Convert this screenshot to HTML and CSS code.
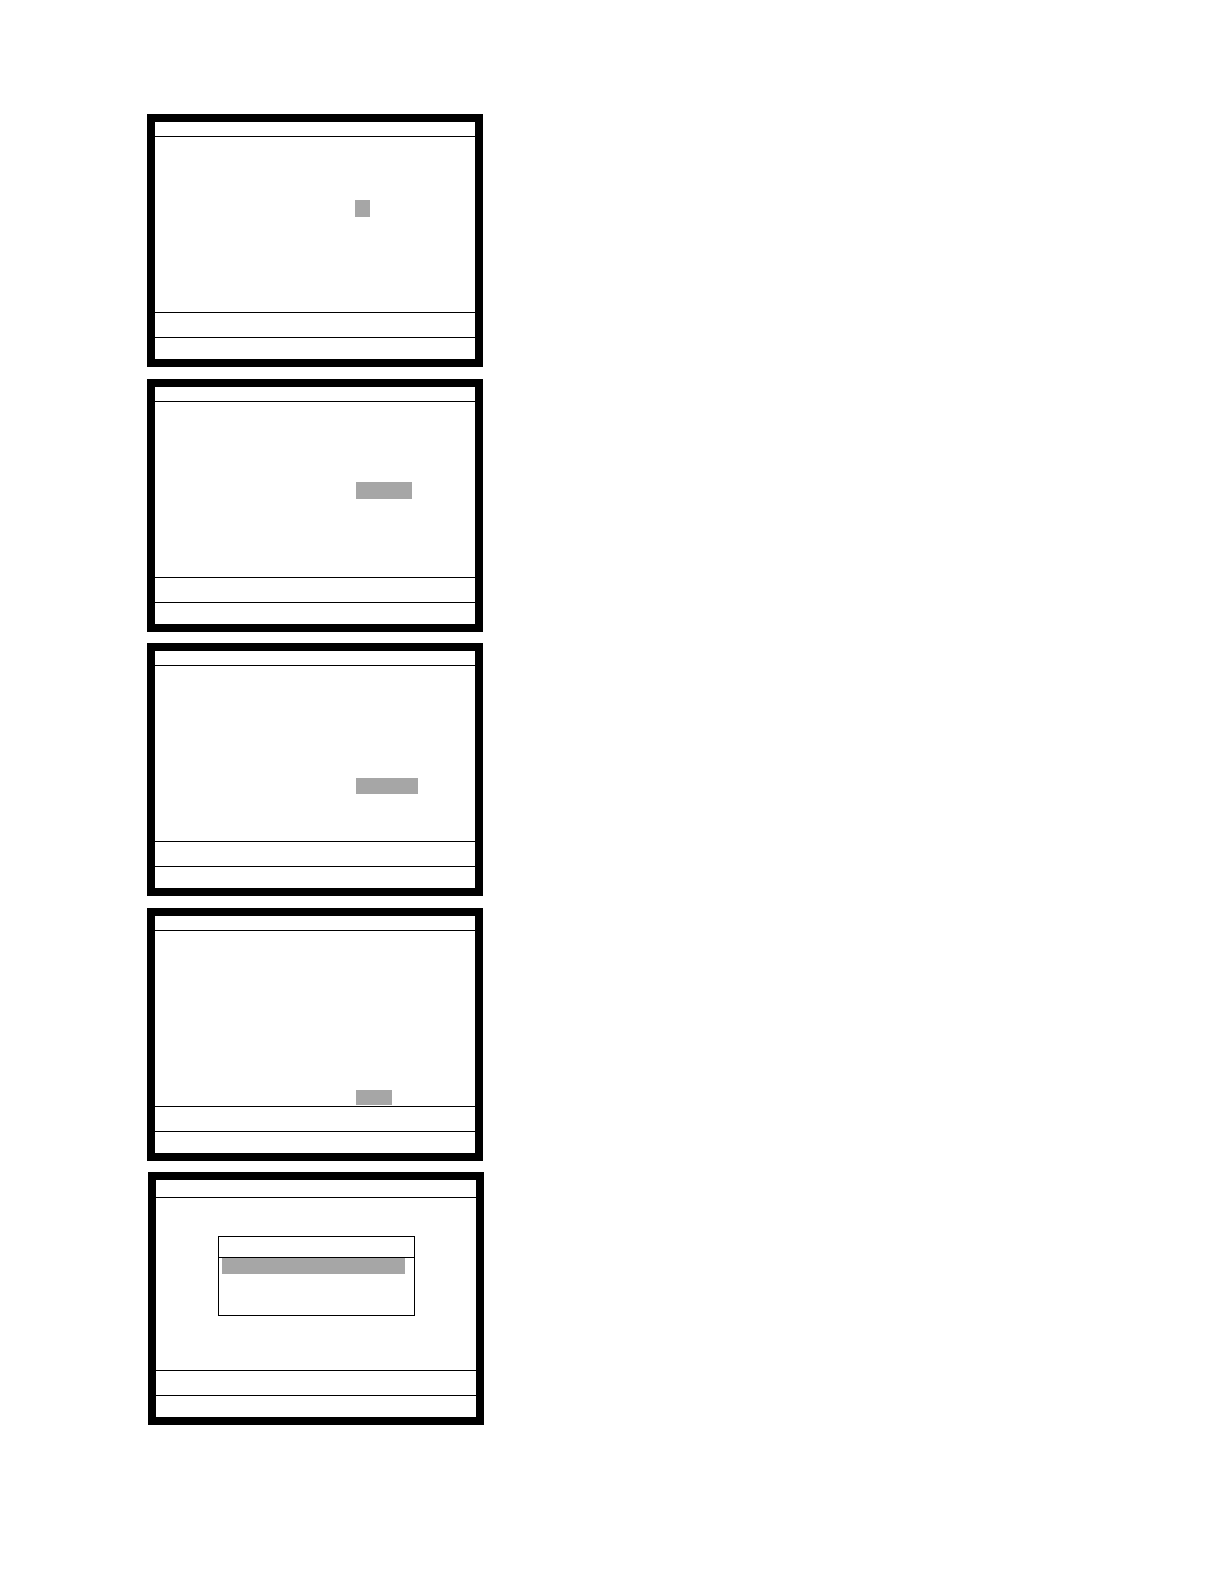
FILE: index.html
```
<!DOCTYPE html>
<html>
<head>
<meta charset="utf-8">
<link rel="stylesheet" href="styles.css">
</head>
<body>
<main class="stack">
  <section class="screen">
    <div class="bar-top"></div>
    <div class="area area-1"><span class="sel sel-1"></span></div>
    <div class="bar-mid"></div>
    <div class="bar-low"></div>
  </section>
  <section class="screen">
    <div class="bar-top"></div>
    <div class="area area-2"><span class="sel sel-2"></span></div>
    <div class="bar-mid"></div>
    <div class="bar-low"></div>
  </section>
  <section class="screen">
    <div class="bar-top"></div>
    <div class="area area-3"><span class="sel sel-3"></span></div>
    <div class="bar-mid"></div>
    <div class="bar-low"></div>
  </section>
  <section class="screen">
    <div class="bar-top"></div>
    <div class="area area-4"><span class="sel sel-4"></span></div>
    <div class="bar-mid"></div>
    <div class="bar-low"></div>
  </section>
  <section class="screen screen-5">
    <div class="bar-top bar-top-5"></div>
    <div class="area area-5">
      <div class="dialog">
        <div class="dialog-head"></div>
        <div class="dialog-list"><span class="dialog-item"></span></div>
      </div>
    </div>
    <div class="bar-mid"></div>
    <div class="bar-low"></div>
  </section>
</main>
</body>
</html>
```
FILE: styles.css
```
html, body {
  margin: 0;
  padding: 0;
  background: #ffffff;
  font-family: "Liberation Sans", Arial, sans-serif;
}

.stack {
  display: flex;
  flex-direction: column;
  align-items: flex-start;
  gap: 11.5px;
  padding: 114px 0 0 147px;
}

.screen {
  box-sizing: border-box;
  width: 336px;
  height: 253px;
  border: 8px solid #000;
  background: #fff;
  display: flex;
  flex-direction: column;
}

.screen-5 {
  margin-left: 1px;
}

.bar-top {
  height: 14px;
  border-bottom: 1px solid #000;
  flex: none;
}

.bar-top-5 {
  height: 17px;
  margin-right: -8px;
}

.area {
  flex: 1;
  border-bottom: 1px solid #000;
  display: flex;
  flex-direction: column;
  align-items: flex-start;
  padding-left: 200px;
}

.bar-mid {
  height: 24px;
  border-bottom: 1px solid #000;
  flex: none;
}

.bar-low {
  height: 21px;
  flex: none;
}

.sel {
  display: block;
  background: #a6a6a6;
}

.area-1 { padding-top: 63px; }
.sel-1 { width: 15px; height: 17px; }

.area-2 { padding-top: 80px; padding-left: 201px; }
.sel-2 { width: 56px; height: 17px; }

.area-3 { padding-top: 112px; padding-left: 201px; }
.sel-3 { width: 62px; height: 16px; }

.area-4 { padding-top: 159px; padding-left: 201px; }
.sel-4 { width: 36px; height: 15px; }

.area-5 {
  padding-left: 62px;
  padding-top: 38px;
}

.dialog {
  box-sizing: border-box;
  width: 197px;
  height: 80px;
  border: 1px solid #000;
  display: flex;
  flex-direction: column;
}

.dialog-head {
  height: 20px;
  border-bottom: 1px solid #000;
  flex: none;
}

.dialog-list {
  padding: 0 9px 0 3px;
}

.dialog-item {
  display: block;
  height: 16px;
  background: #a6a6a6;
}
```
